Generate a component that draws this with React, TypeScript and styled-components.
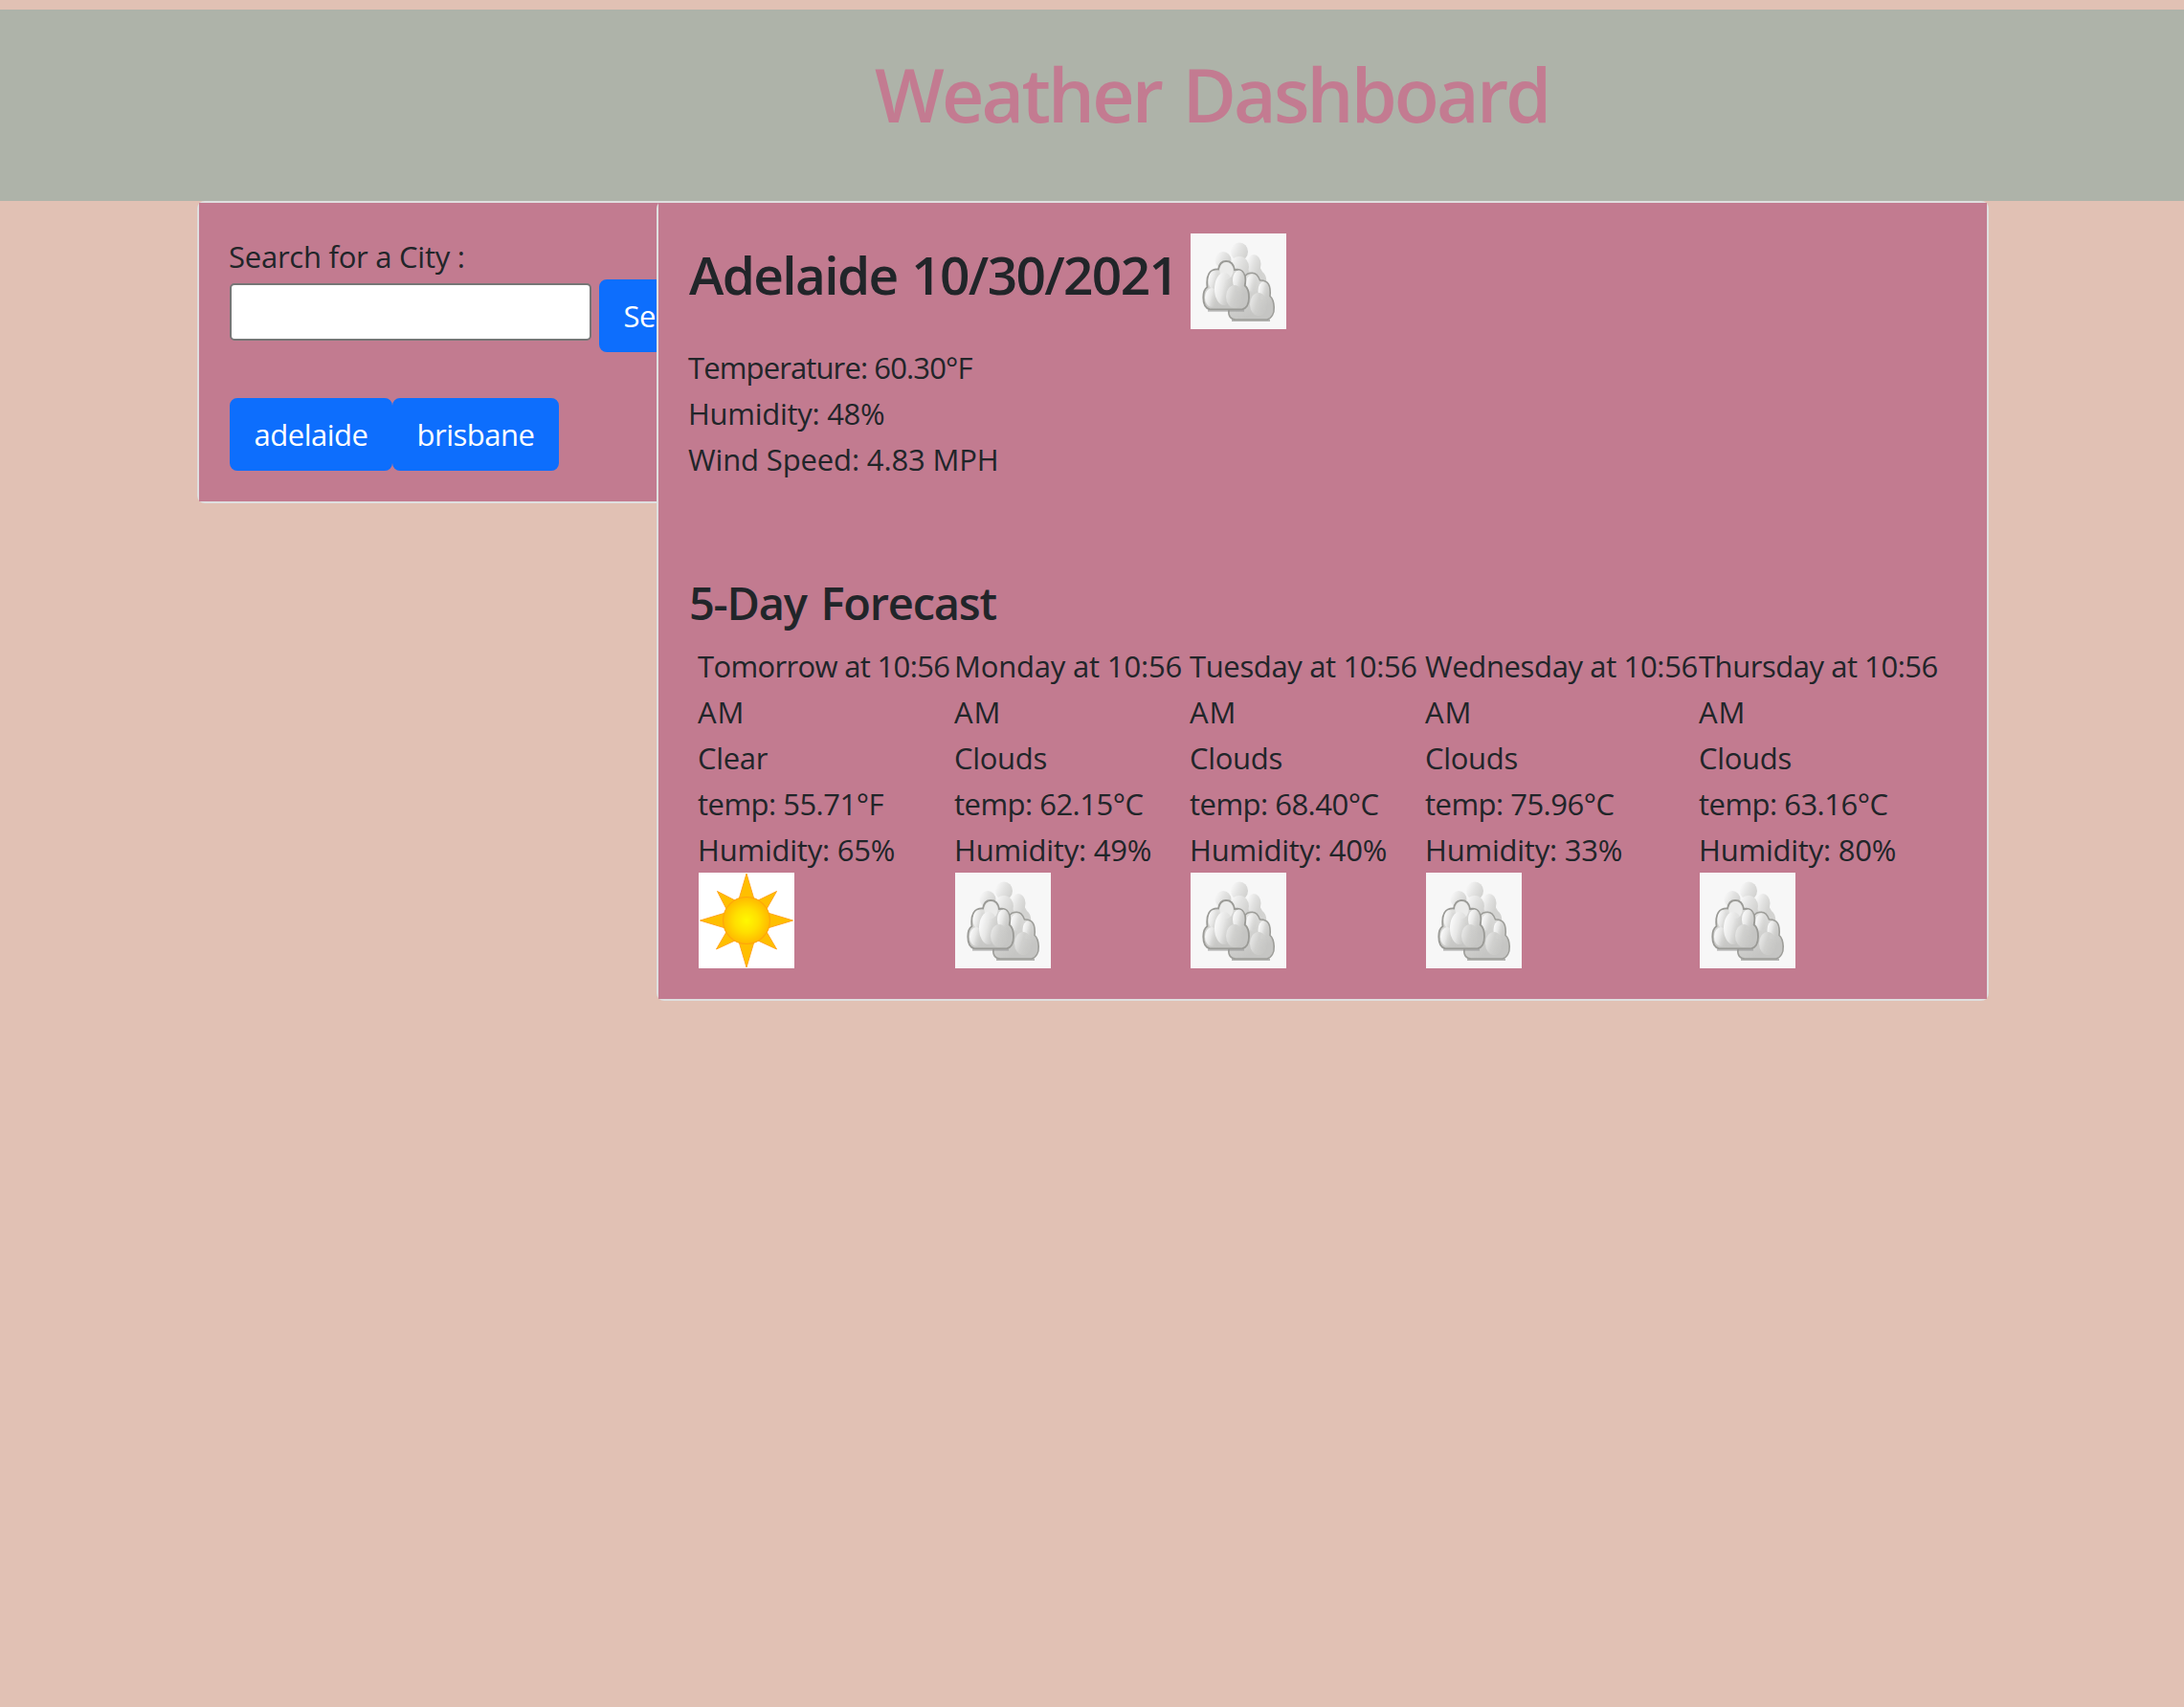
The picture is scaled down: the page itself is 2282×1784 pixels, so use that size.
import React, { useId } from "react";
import styled, { createGlobalStyle } from "styled-components";

const GlobalStyle = createGlobalStyle`
  * { box-sizing: border-box; }
  body {
    margin: 0;
    background: #e1c1b4;
    color: #212529;
    font-family: "Open Sans", "Noto Sans", sans-serif;
    font-size: 31px;
    line-height: 48px;
  }
`;

const Page = styled.div`
  min-height: 1784px;
  padding-top: 10px;
`;

const Header = styled.header`
  height: 200px;
  padding: 41px 0 0 914px;
  background: #aeb3a9;
`;

const heading = `
  margin: 0;
  font-family: "Open Sans", "Noto Sans", sans-serif;
  font-weight: 600;
  white-space: nowrap;
`;

const Title = styled.h1`
  ${heading}
  color: #c37b91;
  font-size: 77px;
  line-height: 96px;
  letter-spacing: -2.8px;
  word-spacing: 5px;
`;

const Main = styled.main`
  display: flex;
  align-items: flex-start;
  padding-left: 206px;
`;

const Card = styled.section`
  flex: none;
  border: 2px solid rgba(0, 0, 0, 0.125);
  border-radius: 8px;
  background: #fff;
`;

const SearchCard = styled(Card)`
  width: 596px;
`;

const WeatherCard = styled(Card)`
  position: relative;
  width: 1392px;
  margin-left: -116px;
`;

const CardBody = styled.div`
  padding: 32px;
  background: #c27b90;
`;

const Text = styled.div<{ $spacing?: number }>`
  height: 48px;
  margin-left: -1px;
  white-space: nowrap;
  letter-spacing: ${(p) => p.$spacing ?? 0}px;
`;

const SearchForm = styled.form`
  display: flex;
  align-items: flex-start;
  gap: 8px;
  margin-bottom: 48px;
`;

const CityInput = styled.input`
  width: 378px;
  height: 60px;
  margin-top: 4px;
  padding: 2px 4px;
  border: 2px solid #767676;
  border-radius: 5px;
  background: #fff;
  font: inherit;
  outline: none;
`;

const Button = styled.button<{ $width: number }>`
  flex: none;
  width: ${(p) => p.$width}px;
  height: 76px;
  padding: 12px 0;
  border: 2px solid #0d6efd;
  border-radius: 8px;
  background: #0d6efd;
  color: #fff;
  font: inherit;
  letter-spacing: -0.5px;
  text-align: center;
  white-space: nowrap;
`;

const History = styled.div`
  display: flex;
`;

const CityRow = styled.div`
  display: flex;
  align-items: flex-start;
  gap: 18px;
  height: 100px;
  margin-bottom: 16px;
`;

const CityName = styled.h2`
  ${heading}
  width: 506px;
  margin-top: 9px;
  font-size: 55px;
  line-height: 67px;
  letter-spacing: -1.65px;
  word-spacing: 2px;
`;

const ForecastTitle = styled.h3`
  ${heading}
  margin: 97px 0 13px;
  font-size: 47px;
  line-height: 58px;
  letter-spacing: -1.25px;
  word-spacing: 4px;
`;

const Forecast = styled.div`
  display: grid;
  grid-template-columns: 268px 246px 246px 286px 248px;
  padding-left: 10px;
`;

const Picture = styled.svg`
  display: block;
  flex: none;
  width: 100px;
  height: 100px;
`;

function CloudIcon() {
  const id = useId().replace(/[^a-zA-Z0-9]/g, "");
  const puff = `url(#p${id})`;
  const low = `url(#l${id})`;
  const back = `url(#b${id})`;
  const body = `url(#g${id})`;
  const soft = `url(#s${id})`;
  return (
    <Picture viewBox="0 0 100 100">
      <defs>
        <linearGradient id={`p${id}`} x1="0" y1="0.3" x2="0.95" y2="0.7">
          <stop offset="0.05" stopColor="#fafafa" />
          <stop offset="0.45" stopColor="#e6e6e5" />
          <stop offset="1" stopColor="#c8c8c6" stopOpacity="0" />
        </linearGradient>
        <linearGradient id={`l${id}`} x1="0" y1="0.3" x2="0.95" y2="0.7">
          <stop offset="0.05" stopColor="#e6e6e5" />
          <stop offset="0.45" stopColor="#d0d0ce" />
          <stop offset="1" stopColor="#c8c8c6" stopOpacity="0.4" />
        </linearGradient>
        <linearGradient id={`b${id}`} x1="0" y1="0.2" x2="1" y2="0.7">
          <stop offset="0.1" stopColor="#f5f5f5" />
          <stop offset="0.5" stopColor="#e2e2e1" />
          <stop offset="1" stopColor="#d0d0ce" />
        </linearGradient>
        <linearGradient id={`g${id}`} x1="0" y1="0" x2="0.5" y2="0.9">
          <stop offset="0" stopColor="#ececeb" />
          <stop offset="0.6" stopColor="#d2d2d0" />
          <stop offset="1" stopColor="#c5c5c3" />
        </linearGradient>
        <filter id={`s${id}`} filterUnits="userSpaceOnUse" x="0" y="0" width="100" height="100">
          <feGaussianBlur stdDeviation="0.6" />
        </filter>
      </defs>
      <rect width="100" height="100" fill="#f7f7f7" />
      <g filter={soft}>
        <path d="M45 30 L62 28 C71 31 74 38 75 40 C79 43 80 48 79 56 L55 62 Z" fill="#d3d3d1" />
        <ellipse cx="51" cy="19" rx="9" ry="9.5" fill={back} />
        <ellipse cx="34" cy="28" rx="8.5" ry="9" fill={back} />
        <ellipse cx="66" cy="32" rx="7.5" ry="10" fill={back} />
        <ellipse cx="51" cy="35" rx="10" ry="11" fill={back} />
      </g>
      <path d="M43 91 H83" stroke="#b5b5b3" strokeWidth="2" fill="none" filter={soft} />
      <path
        d="M40 80 C39 86 42 90 47 90 H80 C85 88.5 87.5 83 87.2 77 C87 72 86 68 83 65.5 C84 55 81.5 48.5 72.5 49 C70 42 66 40.5 62 41.5 C58 42 56 44 55 50 Z"
        fill={body}
        stroke="#9d9d99"
        strokeWidth="1.6"
      />
      <g filter={soft}>
        <ellipse cx="64" cy="52" rx="6" ry="9" fill={puff} />
        <ellipse cx="76" cy="60" rx="5.5" ry="9.5" fill={puff} />
        <ellipse cx="71" cy="74" rx="9" ry="12" fill={low} />
      </g>
      <path d="M18 80.5 H56" stroke="#999" strokeWidth="2.5" fill="none" opacity="0.6" filter={soft} />
      <path
        d="M20 79.3 H54 C59 78 61 73 61 67 C61 61 60 57 56.7 54.5 C59 43 54.5 36.5 46 38 C45 31.5 41 29 37 29 C33 29 30 31.5 29 37.5 C20 37 16 44 17.5 56 C14.5 58 13.3 61 13.3 67 C13.3 73 15 78 20 79.3 Z"
        fill={body}
        stroke="#9a9a96"
        strokeWidth="1.8"
      />
      <g filter={soft}>
        <ellipse cx="24.5" cy="49" rx="6" ry="10" fill={puff} />
        <ellipse cx="37.5" cy="39" rx="7" ry="9" fill="#ebebea" />
        <ellipse cx="22" cy="67" rx="7" ry="10" fill={puff} />
        <ellipse cx="35" cy="58" rx="10" ry="17" fill={puff} />
        <ellipse cx="50.5" cy="49" rx="6.5" ry="10.5" fill={puff} />
        <ellipse cx="46" cy="66" rx="9" ry="12" fill={low} />
      </g>
    </Picture>
  );
}

function SunIcon() {
  return (
    <Picture viewBox="0 0 100 100">
      <defs>
        <radialGradient id="sunDisc">
          <stop offset="0" stopColor="#fff800" />
          <stop offset="0.5" stopColor="#ffe000" />
          <stop offset="1" stopColor="#ffb900" />
        </radialGradient>
      </defs>
      <rect width="100" height="100" fill="#fff" />
      <g fill="#ffbf00" stroke="#ffa51e" strokeWidth="1" strokeLinejoin="round">
        <path d="M50 1 L58 28 H42 Z" />
        <path d="M50 99 L42 72 H58 Z" />
        <path d="M1.5 50 L28 42 V58 Z" />
        <path d="M98.5 50 L72 58 V42 Z" />
        <path d="M19.5 19.5 L38 29 L29 38 Z" />
        <path d="M81.5 19.5 L71 38 L62 29 Z" />
        <path d="M81.5 80 L62 71 L71 62 Z" />
        <path d="M18.5 80 L29 62 L38 71 Z" />
      </g>
      <circle cx="50" cy="50" r="24.5" fill="url(#sunDisc)" stroke="#ffa50a" strokeWidth="1.1" />
    </Picture>
  );
}

const days = [
  { when: "Tomorrow at 10:56", spacing: -0.66, sky: "Clear", temp: "55.71°F", humidity: "65%" },
  { when: "Monday at 10:56", spacing: -0.18, sky: "Clouds", temp: "62.15°C", humidity: "49%" },
  { when: "Tuesday at 10:56", spacing: -0.36, sky: "Clouds", temp: "68.40°C", humidity: "40%" },
  { when: "Wednesday at 10:56", spacing: -0.36, sky: "Clouds", temp: "75.96°C", humidity: "33%" },
  { when: "Thursday at 10:56", spacing: -0.46, sky: "Clouds", temp: "63.16°C", humidity: "80%" },
];

export default function App() {
  return (
    <Page>
      <GlobalStyle />
      <Header>
        <Title>Weather Dashboard</Title>
      </Header>
      <Main>
        <SearchCard>
          <CardBody>
            <Text $spacing={-0.25}>Search for a City :</Text>
            <SearchForm onSubmit={(e) => e.preventDefault()}>
              <CityInput aria-label="City" />
              <Button $width={146}>Search</Button>
            </SearchForm>
            <History>
              <Button $width={170}>adelaide</Button>
              <Button $width={174}>brisbane</Button>
            </History>
          </CardBody>
        </SearchCard>
        <WeatherCard>
          <CardBody>
            <CityRow>
              <CityName>Adelaide 10/30/2021</CityName>
              <CloudIcon />
            </CityRow>
            <Text $spacing={-0.88}>Temperature: 60.30°F</Text>
            <Text $spacing={-0.28}>Humidity: 48%</Text>
            <Text $spacing={-0.13}>Wind Speed: 4.83 MPH</Text>
            <ForecastTitle>5-Day Forecast</ForecastTitle>
            <Forecast>
              {days.map((d) => (
                <div key={d.when}>
                  <Text $spacing={d.spacing}>{d.when}</Text>
                  <Text $spacing={1}>AM</Text>
                  <Text $spacing={-0.3}>{d.sky}</Text>
                  <Text $spacing={-0.52}>temp: {d.temp}</Text>
                  <Text $spacing={-0.22}>Humidity: {d.humidity}</Text>
                  {d.sky === "Clear" ? <SunIcon /> : <CloudIcon />}
                </div>
              ))}
            </Forecast>
          </CardBody>
        </WeatherCard>
      </Main>
    </Page>
  );
}
